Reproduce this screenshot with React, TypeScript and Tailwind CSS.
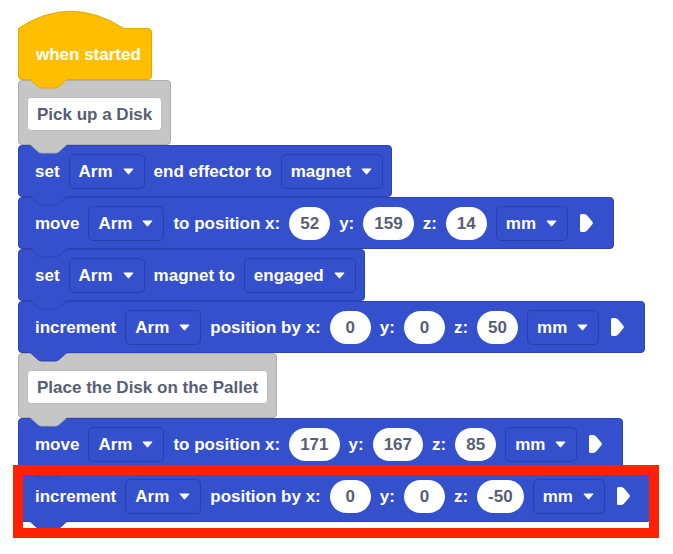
import React from 'react';

const font = "font-['Liberation_Sans',Arial,sans-serif] font-bold text-[17px] leading-none";

function Tab({ fill, stroke }: { fill: string; stroke: string }) {
  return (
    <svg className="absolute left-[11px] top-full z-10" width="37" height="10" viewBox="0 0 37 10">
      <path d="M0 0 L8 7.5 Q9.5 9 11.5 9 H25.5 Q27.5 9 29 7.5 L37 0 Z" fill={fill} />
      <path d="M0 0.5 L8 7.5 Q9.5 9 11.5 9 H25.5 Q27.5 9 29 7.5 L37 0.5" fill="none" stroke={stroke} />
    </svg>
  );
}

function Caret() {
  return (
    <svg width="11" height="7" viewBox="0 0 11 7">
      <path d="M1.2 0.5 H9.8 Q10.8 0.5 10.2 1.3 L6.2 6 Q5.5 6.8 4.8 6 L0.8 1.3 Q0.2 0.5 1.2 0.5 Z" fill="#fff" />
    </svg>
  );
}

function Dropdown({ label }: { label: string }) {
  return (
    <div className="flex items-center h-[35px] pl-[9px] pr-[10px] gap-[10px] border border-[#2a40a8] rounded-[5px]">
      <span>{label}</span>
      <Caret />
    </div>
  );
}

function Num({ value }: { value: string }) {
  return (
    <div className="flex items-center justify-center h-[33px] min-w-[41px] px-[11px] rounded-full bg-white text-[#575e75]">
      {value}
    </div>
  );
}

function Arrow() {
  return (
    <svg className="ml-[3px] mr-[12px]" width="13" height="18" viewBox="0 0 13 18">
      <path
        d="M1.5 0 H4 Q6 0 7.6 2 L12.4 7.8 Q13.3 9 12.4 10.2 L7.6 16 Q6 18 4 18 H1.5 Q0 18 0 16.5 V1.5 Q0 0 1.5 0 Z"
        fill="#fff"
      />
    </svg>
  );
}

function Blue({ children }: { children: React.ReactNode }) {
  return (
    <div className="relative flex items-center w-fit h-[52px] gap-[9px] pl-[16px] pr-[8px] bg-[#3450cc] border border-[#2b43b3] rounded-[4px] text-white">
      {children}
      <Tab fill="#3450cc" stroke="#2b43b3" />
    </div>
  );
}

function Comment({ text }: { text: string }) {
  return (
    <div className="relative w-fit h-[65px] pt-[16px] px-[8px] bg-[#c6c6c6] border border-[#adadad] rounded-[4px]">
      <div className="flex items-center h-[34px] px-[9px] bg-white border border-[#bdbdbd] rounded-[4px] text-[#575e75]">
        {text}
      </div>
      <Tab fill="#c6c6c6" stroke="#adadad" />
    </div>
  );
}

export default function App() {
  return (
    <div className={`relative w-[673px] h-[554px] bg-white pl-[18px] pt-[28px] ${font}`}>
      <div className="flex flex-col items-start">
        <div className="relative flex items-center w-[134px] h-[52px] pl-[17px] bg-[#ffbf00] border border-[#e3aa00] rounded-tr-[4px] rounded-b-[4px] text-white">
          <svg className="absolute left-[-1px] top-[-20px]" width="107" height="22" viewBox="0 0 107 22">
            <path d="M0 22 V19.5 Q52 -15 106 19.5 L106 22 Z" fill="#ffbf00" />
            <path d="M0.5 22 V19.5 Q52 -15 106 19.5 L107 19.5" fill="none" stroke="#e3aa00" />
          </svg>
          <span className="relative">when started</span>
          <Tab fill="#ffbf00" stroke="#e3aa00" />
        </div>

        <Comment text="Pick up a Disk" />

        <Blue>
          <span>set</span>
          <Dropdown label="Arm" />
          <span>end effector to</span>
          <Dropdown label="magnet" />
        </Blue>

        <Blue>
          <span>move</span>
          <Dropdown label="Arm" />
          <span>to position x:</span>
          <Num value="52" />
          <span>y:</span>
          <Num value="159" />
          <span>z:</span>
          <Num value="14" />
          <Dropdown label="mm" />
          <Arrow />
        </Blue>

        <Blue>
          <span>set</span>
          <Dropdown label="Arm" />
          <span>magnet to</span>
          <Dropdown label="engaged" />
        </Blue>

        <Blue>
          <span>increment</span>
          <Dropdown label="Arm" />
          <span>position by x:</span>
          <Num value="0" />
          <span>y:</span>
          <Num value="0" />
          <span>z:</span>
          <Num value="50" />
          <Dropdown label="mm" />
          <Arrow />
        </Blue>

        <Comment text="Place the Disk on the Pallet" />

        <Blue>
          <span>move</span>
          <Dropdown label="Arm" />
          <span>to position x:</span>
          <Num value="171" />
          <span>y:</span>
          <Num value="167" />
          <span>z:</span>
          <Num value="85" />
          <Dropdown label="mm" />
          <Arrow />
        </Blue>

        <Blue>
          <span>increment</span>
          <Dropdown label="Arm" />
          <span>position by x:</span>
          <Num value="0" />
          <span>y:</span>
          <Num value="0" />
          <span>z:</span>
          <Num value="-50" />
          <Dropdown label="mm" />
          <Arrow />
        </Blue>
      </div>

      <div className="absolute left-[13px] top-[465px] w-[646px] h-[73px] border-[10px] border-[#ff2200] z-20 pointer-events-none" />
    </div>
  );
}
